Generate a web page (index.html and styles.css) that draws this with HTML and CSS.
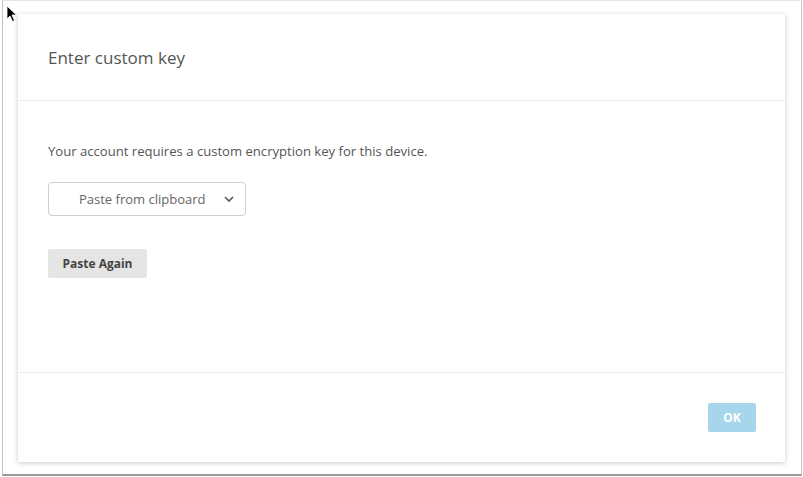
FILE: index.html
```html
<!DOCTYPE html>
<html>
<head>
<meta charset="utf-8">
<link rel="stylesheet" href="styles.css">
</head>
<body>
<div class="frame">
  <div class="dialog">
    <div class="header">
      <h1 class="title">Enter custom key</h1>
    </div>
    <div class="content">
      <p class="message">Your account requires a custom encryption key for this device.</p>
      <div class="select">
        <span class="select-label">Paste from clipboard</span>
        <svg class="chevron" width="10" height="6" viewBox="0 0 10 6"><path d="M1 1 L5 5 L9 1" fill="none" stroke="#555" stroke-width="1.6"/></svg>
      </div>
      <button class="btn-secondary">Paste Again</button>
    </div>
    <div class="footer">
      <button class="btn-primary">OK</button>
    </div>
  </div>
</div>
<svg class="cursor" width="12" height="18" viewBox="0 0 12 18"><path d="M1 1 L1 14 L4 11 L6.5 16.5 L8.5 15.5 L6 10 L10.5 10 Z" fill="#000" stroke="#fff" stroke-width="0.8"/></svg>
</body>
</html>
```
FILE: styles.css
```css
html, body {
  margin: 0;
  padding: 0;
  background: #fff;
}
body {
  width: 803px;
  height: 477px;
  position: relative;
  font-family: "Open Sans", "Noto Sans", sans-serif;
}
.frame {
  margin-left: 2px;
  width: 800px;
  height: 476px;
  border-top: 1px solid #e6e6e6;
  border-left: 1px solid #c4c4c4;
  border-right: 1px solid #c8c8c8;
  border-bottom: 2px solid #9a9a9a;
  padding: 13px 0 0 15px;
  box-sizing: border-box;
}
.dialog {
  width: 767px;
  height: 448px;
  background: #fff;
  box-shadow: 0 1px 5px rgba(0,0,0,0.22);
  display: flex;
  flex-direction: column;
}
.header {
  height: 87px;
  border-bottom: 1px solid #ececec;
  display: flex;
  align-items: center;
  padding-left: 30px;
  box-sizing: border-box;
}
.title {
  margin: 0;
  font-size: 17px;
  font-weight: 400;
  color: #555;
}
.content {
  flex: 1;
  padding: 40px 30px 0 30px;
  border-bottom: 1px solid #ececec;
  display: flex;
  flex-direction: column;
  align-items: flex-start;
}
.message {
  margin: 0;
  font-size: 13.1px;
  color: #555;
  line-height: 20px;
}
.select {
  margin-top: 21px;
  width: 198px;
  height: 34px;
  box-sizing: border-box;
  border: 1px solid #cfcfcf;
  border-radius: 4px;
  display: flex;
  align-items: center;
  padding-left: 30px;
}
.select-label {
  font-size: 13px;
  color: #666;
  width: 145px;
}
.chevron {
  display: block;
}
.btn-secondary {
  margin-top: 33px;
  width: 99px;
  height: 29px;
  border: none;
  border-radius: 2px;
  background: #e5e5e5;
  color: #444;
  font-family: inherit;
  font-size: 12px;
  font-weight: 700;
  padding: 0;
}
.footer {
  height: 89px;
  display: flex;
  justify-content: flex-end;
  align-items: center;
  padding-right: 29px;
  box-sizing: border-box;
}
.btn-primary {
  width: 48px;
  height: 29px;
  border: none;
  border-radius: 2px;
  background: #a7d6ec;
  color: #fff;
  font-family: inherit;
  font-size: 12px;
  font-weight: 700;
  padding: 0;
}
.cursor {
  position: absolute;
  left: 6px;
  top: 5px;
}
```
